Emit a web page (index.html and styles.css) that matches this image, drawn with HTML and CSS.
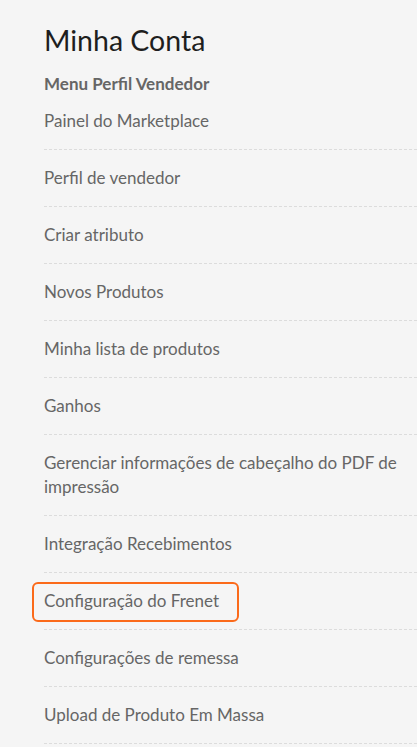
FILE: index.html
```html
<!DOCTYPE html>
<html lang="pt-BR">
<head>
<meta charset="utf-8">
<title>Minha Conta</title>
<link rel="stylesheet" href="styles.css">
</head>
<body>
<div class="account">
  <h1 class="title">Minha Conta</h1>
  <div class="subtitle">Menu Perfil Vendedor</div>
  <ul class="menu">
    <li class="item">Painel do Marketplace</li>
    <li class="item">Perfil de vendedor</li>
    <li class="item">Criar atributo</li>
    <li class="item">Novos Produtos</li>
    <li class="item">Minha lista de produtos</li>
    <li class="item">Ganhos</li>
    <li class="item">Gerenciar informações de cabeçalho do PDF de impressão</li>
    <li class="item">Integração Recebimentos</li>
    <li class="item item-marked">Configuração do Frenet<span class="highlight"></span></li>
    <li class="item">Configurações de remessa</li>
    <li class="item">Upload de Produto Em Massa</li>
  </ul>
</div>
</body>
</html>
```

FILE: styles.css
```css
html, body {
  margin: 0;
  padding: 0;
  background: #f5f5f5;
}

.account {
  padding: 22px 0 0 44px;
  font-family: Lato, "Open Sans", sans-serif;
}

.title {
  margin: 0;
  font-size: 28.5px;
  line-height: 36px;
  font-weight: 400;
  color: #1e1e1e;
}

.subtitle {
  margin-top: 16px;
  font-size: 17px;
  line-height: 19px;
  font-weight: 700;
  color: #666;
}

.menu {
  list-style: none;
  margin: 0;
  padding: 0;
}

.item {
  padding: 16px 0;
  font-size: 17px;
  line-height: 24px;
  color: #666;
  border-bottom: 1px dashed #dcdcdc;
  position: relative;
}

.highlight {
  position: absolute;
  left: -12px;
  top: 9px;
  width: 207px;
  height: 40px;
  box-sizing: border-box;
  border: 2px solid #fb6a1a;
  border-radius: 6px;
}
```
